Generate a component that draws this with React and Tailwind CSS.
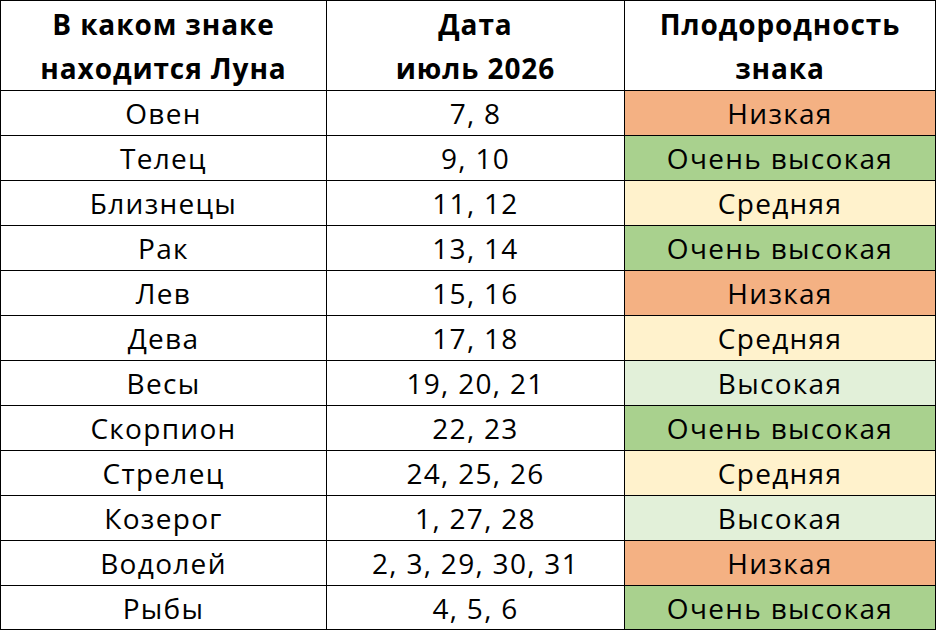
import React from 'react';

const LEVELS = {
  low: { label: 'Низкая', bg: 'bg-[#f4b183]' },
  mid: { label: 'Средняя', bg: 'bg-[#fff2cc]' },
  high: { label: 'Высокая', bg: 'bg-[#e2f0d9]' },
  top: { label: 'Очень высокая', bg: 'bg-[#a9d18e]' },
};

const rows = [
  ['Овен', '7, 8', 'low'],
  ['Телец', '9, 10', 'top'],
  ['Близнецы', '11, 12', 'mid'],
  ['Рак', '13, 14', 'top'],
  ['Лев', '15, 16', 'low'],
  ['Дева', '17, 18', 'mid'],
  ['Весы', '19, 20, 21', 'high'],
  ['Скорпион', '22, 23', 'top'],
  ['Стрелец', '24, 25, 26', 'mid'],
  ['Козерог', '1, 27, 28', 'high'],
  ['Водолей', '2, 3, 29, 30, 31', 'low'],
  ['Рыбы', '4, 5, 6', 'top'],
];

const head = 'flex items-center justify-center h-[90px] border-r border-b border-black text-center font-bold text-[28px] leading-[44px] tracking-[0.9px]';
const cell = 'flex items-center justify-center border-r border-b border-black text-[28px] tracking-[1.3px]';

export default function App() {
  return (
    <div className="w-[937px] h-[630px] bg-white overflow-hidden font-['Open_Sans','Noto_Sans',sans-serif] text-black">
      <div className="grid grid-cols-[326px_298px_311px] w-[936px] border-l border-t border-black">
        {/* header */}
        <div className={head}>
          В каком знаке<br />находится Луна
        </div>
        <div className={head}>
          Дата<br />июль 2026
        </div>
        <div className={head}>
          Плодородность<br />знака
        </div>

        {rows.map(([sign, dates, level], i) => {
          const h = i === rows.length - 1 ? 'h-[44px]' : 'h-[45px]';
          return (
            <React.Fragment key={sign}>
              <div className={`${cell} ${h}`}>{sign}</div>
              <div className={`${cell} ${h}`}>{dates}</div>
              <div className={`${cell} ${h} ${LEVELS[level].bg}`}>{LEVELS[level].label}</div>
            </React.Fragment>
          );
        })}
      </div>
    </div>
  );
}
